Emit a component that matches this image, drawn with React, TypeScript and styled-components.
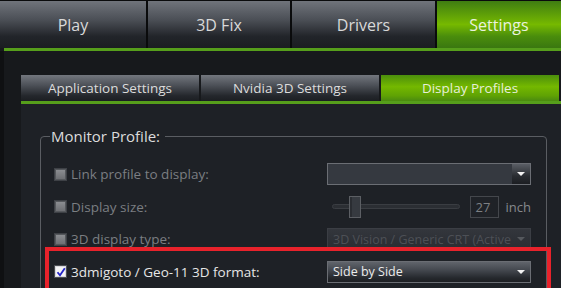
import React from 'react';
import styled, { createGlobalStyle } from 'styled-components';

const GlobalStyle = createGlobalStyle`
  html, body {
    margin: 0;
    padding: 0;
    background: #17191c;
  }
  * {
    box-sizing: border-box;
  }
`;

const Window = styled.div`
  width: 561px;
  height: 288px;
  overflow: hidden;
  background: #17191c;
  font-family: "Open Sans", "Noto Sans", sans-serif;
  display: flex;
  flex-direction: column;
`;

const TopTabs = styled.div`
  flex: none;
  display: flex;
  gap: 2px;
  height: 48px;
  border-top: 1px solid #0a0b0c;
  background: #0a0b0c;
`;

const TopTab = styled.div<{ $active?: boolean; $width?: number }>`
  flex: ${({ $width }) => ($width ? `0 0 ${$width}px` : '1 1 auto')};
  display: flex;
  align-items: center;
  justify-content: center;
  padding-top: 1px;
  font-size: 16px;
  color: ${({ $active }) => ($active ? '#e9f2df' : '#d9d9d9')};
  background: ${({ $active }) =>
    $active
      ? 'linear-gradient(#3f7d12 0%, #76b900 50%, #4a8d0c 75%, #3a7710 100%)'
      : 'linear-gradient(#70747b 0%, #4b4f56 40%, #22252a 75%, #1b1d21 100%)'};
`;

const GreenRule = styled.div<{ $inset?: number }>`
  flex: none;
  height: 3px;
  margin-left: ${({ $inset }) => $inset ?? 0}px;
  background: #569e1b;
`;

const Body = styled.div`
  flex: none;
  display: flex;
  border-left: 4px solid #0f1012;
  padding: 24px 0 0 17px;
`;

const Content = styled.div`
  flex: 1;
  display: flex;
  flex-direction: column;
`;

const SubTabs = styled.div`
  flex: none;
  display: flex;
  gap: 2px;
  height: 26px;
  padding-right: 2px;
`;

const SubTab = styled.div<{ $active?: boolean }>`
  flex: 1 1 0;
  display: flex;
  align-items: center;
  justify-content: center;
  font-size: 13.5px;
  color: ${({ $active }) => ($active ? '#e6efdb' : '#dcdcdc')};
  background: ${({ $active }) =>
    $active
      ? 'linear-gradient(#4b8e0c 0%, #74b800 45%, #5fa204 80%, #4a8a10 100%)'
      : 'linear-gradient(#73777e 0%, #4c5057 40%, #24272c 80%, #1c1e22 100%)'};
`;

const Panel = styled.div`
  flex: none;
  background: #1e2126;
  padding: 22px 14px 40px 19px;
`;

const Group = styled.fieldset`
  margin: 0;
  padding: 17px 0 40px 13px;
  border: 1px solid #5a5d62;
  border-radius: 4px;
`;

const Legend = styled.legend`
  padding: 0 5px 0 1px;
  margin-left: -4px;
  font-size: 15px;
  color: #dcdcdc;
`;

const Rows = styled.div`
  display: flex;
  flex-direction: column;
  gap: 10.5px;
  width: 477px;
`;

const Row = styled.div<{ $highlight?: boolean }>`
  display: grid;
  grid-template-columns: 273px 204px;
  align-items: center;
  height: ${({ $highlight }) => ($highlight ? 'auto' : '22px')};
  ${({ $highlight }) =>
    $highlight &&
    `
    margin: -14px -20px 0 -9px;
    border: 4px solid #e8222b;
    padding: 10px 16px 10px 5px;
  `}
`;

const Label = styled.div<{ $enabled?: boolean }>`
  display: flex;
  align-items: center;
  gap: 4px;
  font-size: 13.5px;
  color: ${({ $enabled }) => ($enabled ? '#e6e6e6' : '#7b7e82')};
  white-space: nowrap;
`;

const Box = styled.span<{ $checked?: boolean }>`
  width: 13px;
  height: 13px;
  flex: 0 0 13px;
  border: 1px solid ${({ $checked }) => ($checked ? '#4a4d52' : '#3e4146')};
  background: ${({ $checked }) =>
    $checked ? '#f4f4f6' : 'linear-gradient(#8e9094, #6a6c70)'};
  box-shadow: inset 0 0 0 1px ${({ $checked }) => ($checked ? '#d8d8dc' : '#55585c')};
  display: flex;
  align-items: center;
  justify-content: center;
`;

const Select = styled.div<{ $variant: 'empty' | 'disabled' | 'active' }>`
  height: 22px;
  display: flex;
  align-items: center;
  border: 1px solid ${({ $variant }) => ($variant === 'disabled' ? '#3b3e44' : '#6b6e74')};
  background: ${({ $variant }) =>
    $variant === 'active'
      ? 'linear-gradient(#60646b 0%, #44484f 40%, #25282d 80%, #1d1f23 100%)'
      : $variant === 'disabled'
      ? 'linear-gradient(#33363c, #2a2d32)'
      : '#353940'};
  overflow: hidden;
`;

const SelectText = styled.span<{ $dim?: boolean }>`
  flex: 1;
  padding-left: 5px;
  font-size: 12.5px;
  white-space: nowrap;
  overflow: hidden;
  color: ${({ $dim }) => ($dim ? '#4d5056' : '#ececec')};
`;

const ArrowCell = styled.span<{ $shaded?: boolean }>`
  width: 18px;
  align-self: stretch;
  display: flex;
  align-items: center;
  justify-content: center;
  background: ${({ $shaded }) =>
    $shaded ? 'linear-gradient(#5a5e65, #2a2d32 60%, #1c1e22)' : 'transparent'};
`;

const Arrow = styled.span<{ $dim?: boolean }>`
  width: 0;
  height: 0;
  border-left: 4px solid transparent;
  border-right: 4px solid transparent;
  border-top: 4px solid ${({ $dim }) => ($dim ? '#55585d' : '#f2f2f2')};
`;

const SliderLine = styled.div`
  display: flex;
  align-items: center;
  white-space: nowrap;
`;

const Track = styled.div`
  position: relative;
  width: 128px;
  height: 5px;
  margin-left: 5px;
  border: 1px solid #3a3d42;
  border-radius: 3px;
  background: #2b2e33;
`;

const Thumb = styled.div`
  position: absolute;
  left: 16px;
  top: -9px;
  width: 12px;
  height: 22px;
  border: 1px solid #5c5f64;
  background: linear-gradient(90deg, #2a2d32 0 2px, #363a40 2px);
`;

const NumberBox = styled.div`
  margin-left: 10px;
  width: 29px;
  height: 22px;
  border: 1px solid #44474c;
  background: #1f2227;
  color: #7d8084;
  font-size: 13px;
  display: flex;
  align-items: center;
  padding-left: 5px;
`;

const Unit = styled.span`
  margin-left: 7px;
  font-size: 13px;
  color: #86898d;
`;

const CheckMark = () => (
  <svg width="10" height="10" viewBox="0 0 10 10">
    <path d="M1.5 5.2 L4 8.3 L8.8 1.2" fill="none" stroke="#2323c8" strokeWidth="1.8" />
  </svg>
);

export default function App() {
  return (
    <>
      <GlobalStyle />
      <Window>
        <TopTabs>
          <TopTab $width={146}>Play</TopTab>
          <TopTab $width={142}>3D Fix</TopTab>
          <TopTab $width={143}>Drivers</TopTab>
          <TopTab $active>Settings</TopTab>
        </TopTabs>
        <GreenRule $inset={4} />
        <Body>
          <Content>
            <SubTabs>
              <SubTab>Application Settings</SubTab>
              <SubTab>Nvidia 3D Settings</SubTab>
              <SubTab $active>Display Profiles</SubTab>
            </SubTabs>
            <GreenRule />
            <Panel>
              <Group>
                <Legend>Monitor Profile:</Legend>
                <Rows>
                  <Row>
                    <Label>
                      <Box />
                      Link profile to display:
                    </Label>
                    <Select $variant="empty">
                      <SelectText />
                      <ArrowCell $shaded>
                        <Arrow />
                      </ArrowCell>
                    </Select>
                  </Row>
                  <Row>
                    <Label>
                      <Box />
                      Display size:
                    </Label>
                    <SliderLine>
                      <Track>
                        <Thumb />
                      </Track>
                      <NumberBox>27</NumberBox>
                      <Unit>inch</Unit>
                    </SliderLine>
                  </Row>
                  <Row>
                    <Label>
                      <Box />
                      3D display type:
                    </Label>
                    <Select $variant="disabled">
                      <SelectText $dim>3D Vision / Generic CRT (Active 3D)</SelectText>
                      <ArrowCell>
                        <Arrow $dim />
                      </ArrowCell>
                    </Select>
                  </Row>
                  <Row $highlight>
                    <Label $enabled>
                      <Box $checked>
                        <CheckMark />
                      </Box>
                      3dmigoto / Geo-11 3D format:
                    </Label>
                    <Select $variant="active">
                      <SelectText>Side by Side</SelectText>
                      <ArrowCell>
                        <Arrow />
                      </ArrowCell>
                    </Select>
                  </Row>
                </Rows>
              </Group>
            </Panel>
          </Content>
        </Body>
      </Window>
    </>
  );
}
